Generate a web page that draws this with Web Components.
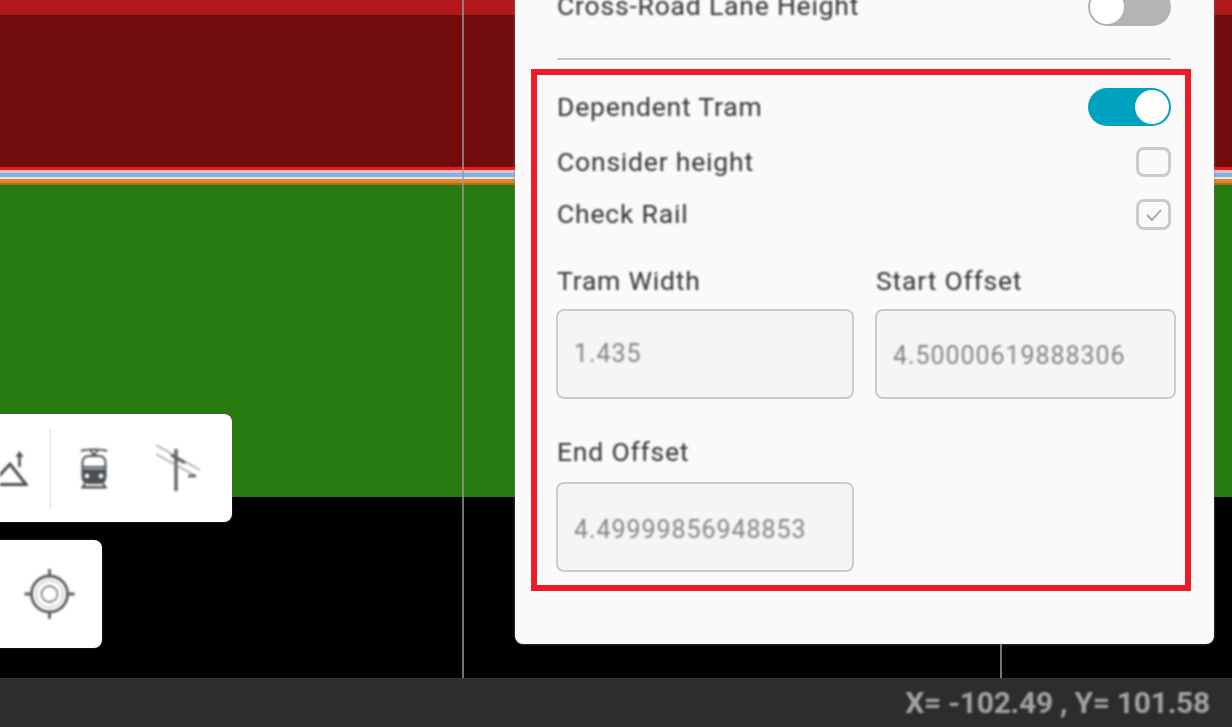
<!DOCTYPE html>
<html>
<head>
<meta charset="utf-8">
<title>Tram settings</title>
<style>
  html, body { margin: 0; height: 100%; background: #000; overflow: hidden; }
  body { font-family: Roboto, "Liberation Sans", sans-serif; }
</style>
</head>
<body>
<app-shell>
  <map-view>
    <tool-box slot="tools" style="top:414px;width:232px">
      <svg width="28" height="42" viewBox="0 0 28 42" fill="none" stroke="#4a5054" stroke-width="3" style="margin:0 21px 0 0">
        <path d="M-8 37L10 17L26 37.500H-8Z"/>
        <path d="M19.500 20V6" stroke-width="2.600"/>
        <path d="M15.500 10l4-6 4 6z" fill="#4a5054" stroke="none"/>
      </svg>
      <span class="sep"></span>
      <svg width="28" height="42" viewBox="0 0 28 42" fill="none" stroke="#4a5054" stroke-width="2" style="margin-left:29px">
        <path d="M1 4c6-2 20-2 26 0M10 3l4 5 4-5"/>
        <rect x="2.500" y="9" width="23" height="27" rx="6"/>
        <path d="M2.500 20h23"/>
        <path d="M3 22h22v10a4 4 0 0 1-4 4H7a4 4 0 0 1-4-4z" fill="#4a5054" stroke="none"/>
        <circle cx="7" cy="29" r="2.300" fill="#fff" stroke="none"/>
        <circle cx="21" cy="29" r="2.300" fill="#fff" stroke="none"/>
        <path d="M5 36l-2 4h22l-2-4M1 40.500h26"/>
      </svg>
      <svg width="46" height="48" viewBox="0 0 46 48" fill="none" stroke="#565c60" style="margin-left:48px">
        <path d="M20 5v42" stroke-width="3.200"/>
        <path d="M0 1l44 25M0 10l40 22" stroke-width="1.400" stroke="#868b8e"/>
        <path d="M15 11l14 8" stroke-width="2.600"/>
        <path d="M32 32h8" stroke-width="2.600"/>
      </svg>
    </tool-box>
    <tool-box slot="tools" style="top:540px;width:102px">
      <svg width="54" height="54" viewBox="0 0 54 54" fill="none" stroke="#565c60" style="margin-left:23px">
        <circle cx="26.500" cy="27" r="18" stroke-width="2.800"/>
        <circle cx="26.500" cy="27" r="13.500" stroke-width="1" stroke="#a8adb0"/>
        <circle cx="26.500" cy="27" r="8" stroke-width="1.800" stroke="#80868a"/>
        <path d="M26.500 2v7M26.500 45v7M1.500 27h7M44.500 27h7" stroke-width="2.800"/>
      </svg>
    </tool-box>
    <side-panel slot="panel">
      <setting-row label="Cross-Road Lane Height" style="height:35px"><toggle-switch></toggle-switch></setting-row>
      <hr-line></hr-line>
      <mark-box>
        <setting-row label="Dependent Tram" style="height:38px"><toggle-switch on></toggle-switch></setting-row>
        <setting-row label="Consider height" style="height:30px;margin-top:21px"><check-box></check-box></setting-row>
        <setting-row label="Check Rail" style="height:31px;margin-top:22px"><check-box checked></check-box></setting-row>
        <field-grid>
          <value-field label="Tram Width" value="1.435" style="--shift-bottom:1px"></value-field>
          <value-field label="Start Offset" value="4.50000619888306" style="--shift:3px"></value-field>
          <value-field label="End Offset" value="4.49999856948853" style="--shift:4px;--label-gap:15px"></value-field>
        </field-grid>
      </mark-box>
    </side-panel>
  </map-view>
  <status-bar>X= -102.49 , Y= 101.58</status-bar>
</app-shell>

<script>
class AppShell extends HTMLElement {
  constructor() {
    super();
    this.attachShadow({ mode: "open" });
    this.shadowRoot.innerHTML = `
      <style>
        :host { display: flex; flex-direction: column; width: 1232px; height: 727px; overflow: hidden; }
      </style>
      <slot></slot>`;
  }
}

class MapView extends HTMLElement {
  constructor() {
    super();
    this.attachShadow({ mode: "open" });
    this.shadowRoot.innerHTML = `
      <style>
        :host { display: flex; flex-direction: column; position: relative; height: 678px; flex: none; overflow: hidden; background: #000; }
        .band { flex: none; }
        .cross { position: absolute; width: 2px; }
      </style>
      <div class="band" style="height:15px;background:#b0181a"></div>
      <div class="band" style="height:152px;background:#720b0b"></div>
      <div class="band" style="height:3px;background:#ea1a20"></div>
      <div class="band" style="height:3px;background:#f4b8c0"></div>
      <div class="band" style="height:4px;background:#78b6f2"></div>
      <div class="band" style="height:2px;background:#e8e4dc"></div>
      <div class="band" style="height:4px;background:#e2832e"></div>
      <div class="band" style="height:2px;background:#b4700f"></div>
      <div class="band" style="height:312px;background:#277a0e"></div>
      <div class="cross" style="left:462px;top:0;bottom:0;background:#9a9a9a;opacity:.75"></div>
      <div class="cross" style="left:1000px;top:600px;bottom:0;background:#777"></div>
      <slot name="tools"></slot>
      <slot name="panel"></slot>`;
  }
}

class ToolBox extends HTMLElement {
  constructor() {
    super();
    this.attachShadow({ mode: "open" });
    this.shadowRoot.innerHTML = `
      <style>
        :host { display: flex; align-items: center; position: absolute; left: 0; height: 108px; background: #fff; border-radius: 0 8px 8px 0; box-shadow: 0 0 2px rgba(90,90,90,.7); }
        ::slotted(.sep) { width: 2px; height: 81px; background: #ececec; flex: none; }
        ::slotted(svg) { flex: none; display: block; filter: blur(0.8px); }
      </style>
      <slot></slot>`;
  }
}

class SidePanel extends HTMLElement {
  constructor() {
    super();
    this.attachShadow({ mode: "open" });
    this.shadowRoot.innerHTML = `
      <style>
        :host { display: flex; flex-direction: column; position: absolute; left: 515px; top: 0; width: 699px; height: 644px; box-sizing: border-box; padding: 0 43px 0 16px; overflow: hidden; background: #fafafa; border-radius: 0 0 8px 8px; box-shadow: 0 0 3px rgba(120,120,120,.8); color: #3e3e3e; }
        .clip { margin-top: -11px; }
      </style>
      <div class="clip"><slot></slot></div>`;
  }
}

class HrLine extends HTMLElement {
  constructor() {
    super();
    this.attachShadow({ mode: "open" });
    this.shadowRoot.innerHTML = `
      <style>
        :host { display: block; height: 2px; margin: 34px 0 9px 26px; background: #c8c8c8; }
      </style>`;
  }
}

class MarkBox extends HTMLElement {
  constructor() {
    super();
    this.attachShadow({ mode: "open" });
    this.shadowRoot.innerHTML = `
      <style>
        :host { display: block; box-sizing: border-box; width: 660px; height: 522px; padding: 13px 14px 0 20px; border: 6px solid #ed1c24; }
      </style>
      <slot></slot>`;
  }
}

class SettingRow extends HTMLElement {
  constructor() {
    super();
    this.attachShadow({ mode: "open" });
  }

  connectedCallback() {
    const indent = this.closest("mark-box") ? "0" : "26px";
    this.shadowRoot.innerHTML = `
      <style>
        :host { display: flex; align-items: center; justify-content: space-between; padding-left: ${indent}; }
        .text { margin-bottom: 2px; font-size: 26.5px; letter-spacing: .8px; color: #333; white-space: nowrap; filter: blur(0.8px); }
      </style>
      <span class="text"></span>
      <slot></slot>`;
    this.shadowRoot.querySelector(".text").textContent = this.getAttribute("label") || "";
  }
}

class ToggleSwitch extends HTMLElement {
  constructor() {
    super();
    this.attachShadow({ mode: "open" });
  }

  connectedCallback() {
    const on = this.hasAttribute("on");
    this.shadowRoot.innerHTML = `
      <style>
        :host { display: flex; justify-content: ${on ? "flex-end" : "flex-start"}; align-items: center; box-sizing: border-box; width: 83px; height: 38px; padding: 2px; border-radius: 19px; background: ${on ? "#00a3bf" : "#b3b3b3"}; filter: blur(0.6px); }
        .knob { width: 34px; height: 34px; border-radius: 50%; background: #fff; }
      </style>
      <div class="knob"></div>`;
  }
}

class CheckBox extends HTMLElement {
  constructor() {
    super();
    this.attachShadow({ mode: "open" });
  }

  connectedCallback() {
    const mark = this.hasAttribute("checked")
      ? `<svg width="20" height="16" viewBox="0 0 20 16" fill="none" stroke="#a0a0a0" stroke-width="1.800"><path d="M3 8l5 5L17 3"/></svg>`
      : "";
    this.shadowRoot.innerHTML = `
      <style>
        :host { display: flex; align-items: center; justify-content: center; box-sizing: border-box; width: 35px; height: 100%; border: 3px solid #cacaca; border-radius: 8px; background: #fafafa; filter: blur(0.6px); }
      </style>
      ${mark}`;
  }
}

class FieldGrid extends HTMLElement {
  constructor() {
    super();
    this.attachShadow({ mode: "open" });
    this.shadowRoot.innerHTML = `
      <style>
        :host { display: grid; grid-template-columns: 298px 301px; column-gap: 21px; row-gap: 38px; margin: 36px 0 0 -1px; }
      </style>
      <slot></slot>`;
  }
}

class ValueField extends HTMLElement {
  constructor() {
    super();
    this.attachShadow({ mode: "open" });
  }

  connectedCallback() {
    this.shadowRoot.innerHTML = `
      <style>
        :host { display: block; }
        label { display: block; height: 30px; line-height: 30px; margin: 0 0 var(--label-gap, 13px) 1px; font-size: 26.5px; letter-spacing: .8px; color: #333; filter: blur(0.8px); }
        .box { display: flex; align-items: center; box-sizing: border-box; height: 90px; padding: var(--shift, 0px) 0 var(--shift-bottom, 0px) 16px; border: 2px solid #cbcbcb; border-radius: 8px; background: #f5f5f5; font-size: 25px; letter-spacing: .95px; color: #858585; }
        .value { filter: blur(0.8px); }
      </style>
      <label></label>
      <div class="box"><span class="value"></span></div>`;
    this.shadowRoot.querySelector("label").textContent = this.getAttribute("label");
    this.shadowRoot.querySelector(".value").textContent = this.getAttribute("value");
  }
}

class StatusBar extends HTMLElement {
  constructor() {
    super();
    this.attachShadow({ mode: "open" });
    this.shadowRoot.innerHTML = `
      <style>
        :host { display: flex; align-items: center; justify-content: flex-end; flex: none; box-sizing: border-box; height: 49px; padding: 0 22px 2px 0; background: #2d2d2d; border-top: 1px solid #383838; color: #a3a3a3; font-size: 30px; font-weight: 700; letter-spacing: -.27px; }
        span { filter: blur(0.8px); }
      </style>
      <span><slot></slot></span>`;
  }
}

customElements.define("app-shell", AppShell);
customElements.define("map-view", MapView);
customElements.define("tool-box", ToolBox);
customElements.define("side-panel", SidePanel);
customElements.define("hr-line", HrLine);
customElements.define("mark-box", MarkBox);
customElements.define("setting-row", SettingRow);
customElements.define("toggle-switch", ToggleSwitch);
customElements.define("check-box", CheckBox);
customElements.define("field-grid", FieldGrid);
customElements.define("value-field", ValueField);
customElements.define("status-bar", StatusBar);
</script>
</body>
</html>
